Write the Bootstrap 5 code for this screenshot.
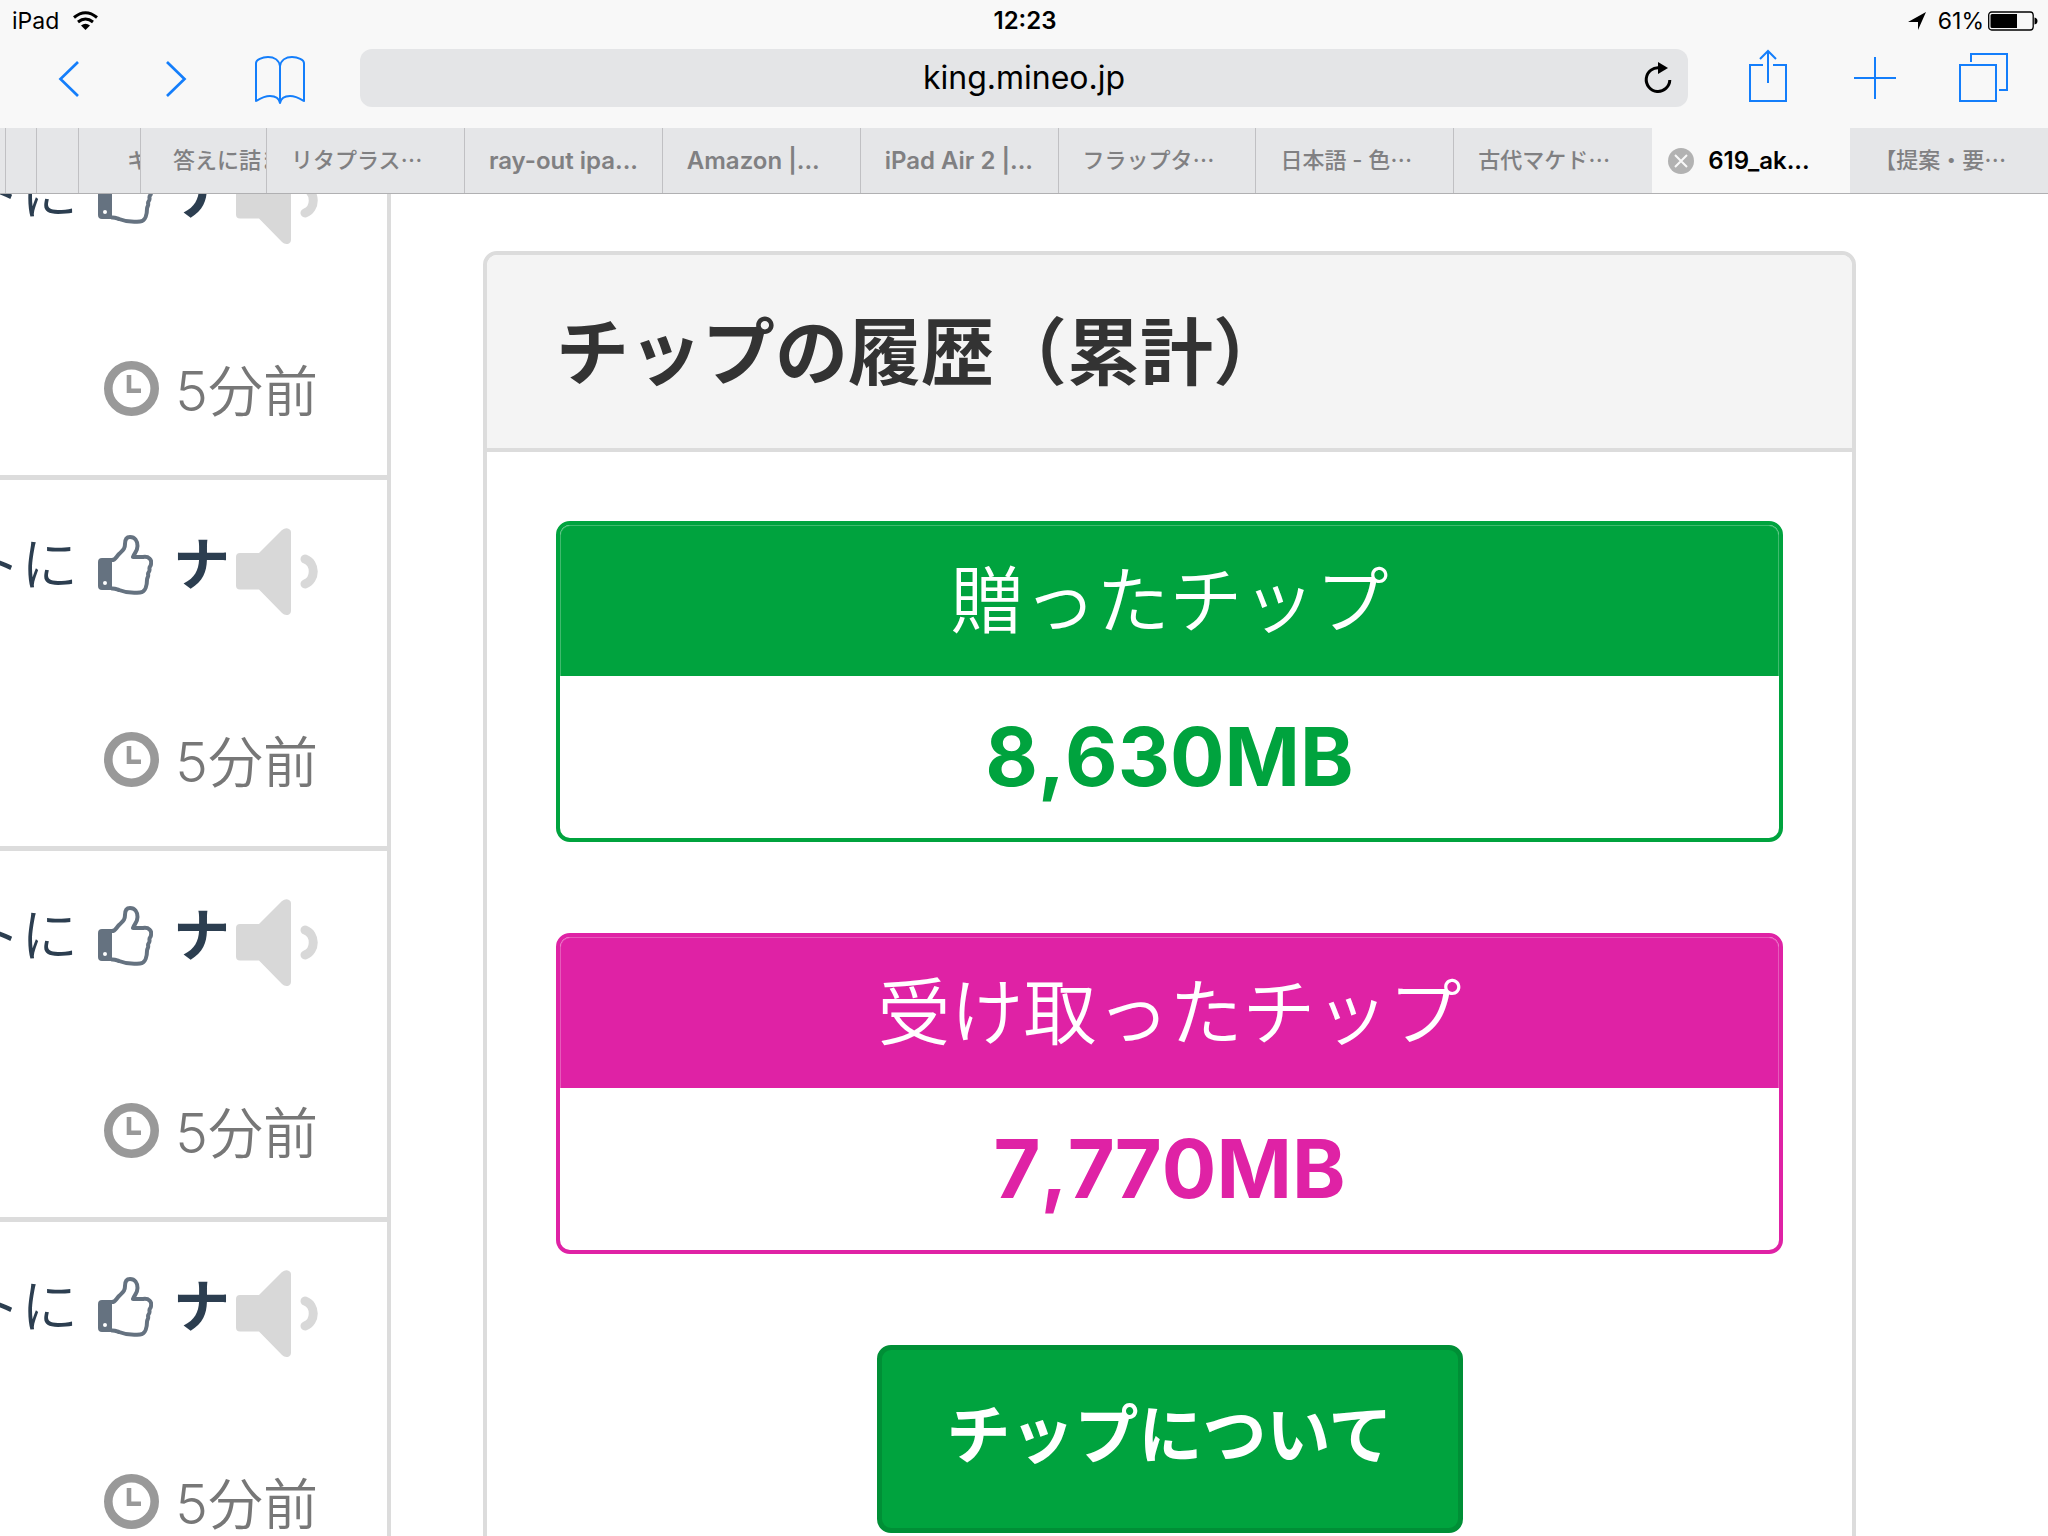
<!DOCTYPE html>
<html lang="ja">
<head>
<meta charset="utf-8">
<meta name="viewport" content="width=device-width, initial-scale=1">
<title>king.mineo.jp</title>
<link href="https://cdn.jsdelivr.net/npm/bootstrap@5.3.0/dist/css/bootstrap.min.css" rel="stylesheet">
<style>
:root { --ios-blue: #147efb; --line: #dcdcdc; --green: #00a33e; --pink: #df22a5; --ink: #2c3e50; }
body { font-family: Inter, "Noto Sans CJK JP", sans-serif; color: #333; background: #fff; }
svg { flex-shrink: 0; }
.app-shell { height: 100vh; }
.chrome { background: #f8f8f8; }
.status-bar { height: 38px; padding: 4px 10px 0 12px; font-size: 23px; line-height: 34px; color: #000; }
.status-bar > div { flex: 1 1 0; }
.clock-text { font-size: 24px; font-weight: 600; }
.toolbar { padding: 11px 15px 21px 16px; }
.tool-btn { width: 106px; height: 58px; padding: 0; border: 0; background: none; color: var(--ios-blue); }
.tool-btn svg, .reload-btn svg { display: block; }
.address { height: 58px; margin: 0 27px 0 26px; border-radius: 12px; background: #e4e5e7; padding-left: 60px; }
.address input { border: 0; background: none; text-align: center; font-size: 32px; line-height: 58px; color: #000; outline: 0; padding: 0; min-width: 0; }
.reload-btn { width: 60px; height: 58px; padding: 0; border: 0; background: none; }
.tab-strip { height: 66px; border-bottom: 1px solid #b0b0b2; }
.page-tab { flex: 1 1 198px; min-width: 0; border-right: 1px solid #c0c0c3; background: #e5e6e8; color: #808082; font-size: 22px; font-weight: 500; line-height: 65px; padding: 0 0 0 24px; overflow: hidden; white-space: nowrap; text-decoration: none; }
.page-tab.latin { font-size: 24px; font-weight: 600; }
.page-tab.current { background: #f8f8f8; color: #000; padding-left: 16px; border-right: 0; font-size: 24px; font-weight: 600; }
.page-tab.end-tab, .page-tab.before-current { border-right: 0; }
.page-tab.stacked { flex: none; }
.st-1 { width: 6px; } .st-2 { width: 31px; } .st-3 { width: 42px; } .st-4 { width: 62px; } .st-5 { width: 126px; }
.page-tab.st-1, .page-tab.st-2, .page-tab.st-3 { padding: 0; }
.page-tab.st-4 { padding-left: 48px; }
.page-tab.st-5 { padding-left: 32px; }
.close-tab { border: 0; background: none; padding: 0; width: 26px; height: 26px; margin-right: 14px; }
.close-tab svg { display: block; }
.viewport-area { min-height: 0; }
.feed { width: 391px; border-right: 4px solid var(--line); }
.feed ul { margin-top: -85px; }
.feed li { height: 371px; padding: 48px 69px 0 0; border-bottom: 5px solid var(--line); }
.feed-title { height: 87px; color: var(--ink); font-size: 57px; line-height: 74px; text-decoration: none; white-space: nowrap; font-weight: 350; }
.feed-title b { font-weight: 700; margin-right: 6px; }
.thumb-icon { margin: 7px 20px 0; color: #657280; }
.feed-time { margin-top: 115px; gap: 16px; color: #777; font-size: 55px; font-weight: 350; white-space: nowrap; }
.feed-time svg { margin: 2px 0 3px; }
.feed-time span { line-height: 56px; padding-top: 4px; }
.content-col { padding: 57px 192px 0 92px; min-width: 0; }
.history { border: 4px solid var(--line); border-radius: 14px; height: 1500px; }
.history > h1 { margin: 0; padding: 2px 69px 0; background: #f4f4f4; border-bottom: 4px solid var(--line); border-radius: 10px 10px 0 0; font-size: 73px; line-height: 191px; font-weight: 700; white-space: nowrap; }
.history-body { padding: 69px; }
.chip-box { --tone: var(--green); border: 4px solid var(--tone); border-radius: 14px; margin-bottom: 91px; text-align: center; }
.chip-box.received { --tone: var(--pink); }
.chip-box h2 { margin: 0; background: var(--tone); border: 1px solid rgba(255, 255, 255, .25); border-bottom: 0; border-radius: 10px 10px 0 0; color: #fff; font-size: 73px; line-height: 150px; font-weight: 350; }
.chip-box p { margin: 0; padding-top: 1px; color: var(--tone); font-size: 81px; line-height: 161px; font-weight: 700; font-kerning: none; }
.about-btn, .about-btn:hover { display: block; width: 586px; margin: 0 auto; padding: 0 0 8px; border: 5px solid #008f36; border-radius: 14px; background: var(--green); color: #fff; font-size: 64px; line-height: 170px; font-weight: 700; }
</style>
</head>
<body>
<svg width="0" height="0" class="d-none" aria-hidden="true">
  <symbol id="thumb" viewBox="0 0 55 60">
    <path fill="currentColor" fill-rule="evenodd" d="M4 23H14V55H4Q0 55 0 51V27Q0 23 4 23ZM7 46a2 2 0 1 0 0 4a2 2 0 1 0 0-4Z"/>
    <path fill="none" stroke="currentColor" stroke-width="4" stroke-linejoin="round" d="M13 25C17 26 18 22 21 19C25 15 27 14 27 9C27 4 29 2 32 2C37 2 39.500 6 39.500 11C39.500 16 37 17 35 22H45C51 21 54 25 53 29C53 32 51 31 51.500 34C52 37 50 37 50 39C51 42 49 42 49 45C49 49 48 57 42 57.500C34 58.500 26 57 21 55C18 54 17 53 13 53.500"/>
  </symbol>
  <symbol id="speaker" viewBox="0 0 82 87">
    <path fill="#d8d8d8" d="M4 25H23L46 2Q50-1 53 1Q55 2 55 4V83Q55 85 53 86.500Q49 88 46 85L23 61.500H4Q0 61.500 0 57.500V29Q0 25 4 25Z"/>
    <path fill="none" stroke="#d8d8d8" stroke-width="9" stroke-linecap="round" d="M69 31C80 35 80 52 69 56"/>
  </symbol>
  <symbol id="clock" viewBox="0 0 55 55">
    <circle cx="27.500" cy="27.500" r="23.200" fill="none" stroke="#999" stroke-width="8.600"/>
    <path fill="none" stroke="#999" stroke-width="4.600" d="M25 14V29.700H37"/>
  </symbol>
</svg>
<div class="app-shell d-flex flex-column overflow-hidden">
  <header class="chrome flex-shrink-0">
    <div class="status-bar d-flex align-items-center">
      <div class="d-flex align-items-center">iPad
        <svg class="ms-2" width="36" height="20" viewBox="0 0 36 20" aria-label="Wi-Fi"><g fill="none" stroke="#000" stroke-width="3"><path d="M7 6.500Q18.500-3 30 6.500"/><path d="M11 11Q18.500 5 26 11"/></g><path d="M14 14.500Q18.500 11 23 14.500L18.500 19Z"/></svg>
      </div>
      <span class="clock-text">12:23</span>
      <div class="d-flex align-items-center justify-content-end">
        <svg class="me-2" width="24" height="20" viewBox="0 0 24 20" aria-label="位置情報"><path d="M20 1L12 19V11H2Z"/></svg>
        <span class="me-1">61%</span>
        <svg width="50" height="20" viewBox="0 0 50 20" aria-label="バッテリー"><rect x=".7" y="1" width="44.500" height="18" rx="3" fill="none" stroke="#000" stroke-width="1.300"/><path d="M4 3H29V17H4Q2.500 17 2.500 15.500V4.500Q2.500 3 4 3ZM46.500 6.500Q49.500 7 49.500 10Q49.500 13 46.500 13.500Z"/></svg>
      </div>
    </div>
    <nav class="toolbar d-flex align-items-center">
      <button class="tool-btn" type="button" aria-label="戻る"><svg width="106" height="58" fill="none" stroke="currentColor" stroke-width="2.700"><path d="M62 13L44.500 30L62 47"/></svg></button>
      <button class="tool-btn" type="button" aria-label="進む"><svg width="106" height="58" fill="none" stroke="currentColor" stroke-width="2.700"><path d="M45 13L62.500 30L45 47"/></svg></button>
      <button class="tool-btn" type="button" aria-label="ブックマーク"><svg width="106" height="58" fill="none" stroke="currentColor" stroke-width="2"><path stroke-linejoin="round" d="M52 53V17C51 11 46 8 40 8C34 8 28 11 28 14V52C33 49 36 47 42 47C48 47 51 49 52 54C53 49 56 47 62 47C68 47 71 49 76 52V14C76 11 70 8 64 8C58 8 53 11 52 17"/></svg></button>
      <form class="address d-flex flex-grow-1" onsubmit="return false">
        <input class="flex-grow-1" type="text" aria-label="アドレス" value="king.mineo.jp">
        <button class="reload-btn" type="button" aria-label="再読み込み"><svg width="60" height="58"><path fill="none" stroke="#000" stroke-width="3" d="M32 19A11.800 11.800 0 1 0 41.800 31"/><path d="M30 13L40 19L30 25Z"/></svg></button>
      </form>
      <button class="tool-btn" type="button" aria-label="共有"><svg width="106" height="58" fill="none" stroke="currentColor" stroke-width="2"><path d="M48 16H35V52H71V16H58M53 34V2M45 10L53 2L61 10"/></svg></button>
      <button class="tool-btn" type="button" aria-label="新規タブ"><svg width="106" height="58" fill="none" stroke="currentColor" stroke-width="2"><path d="M54 8V50M33 29H75"/></svg></button>
      <button class="tool-btn" type="button" aria-label="タブ一覧"><svg width="106" height="58" fill="none" stroke="currentColor" stroke-width="2"><path d="M33 16H69V52H33ZM44 13V5H80V41H72"/></svg></button>
    </nav>
    <nav class="tab-strip d-flex" aria-label="タブ">
      <a href="#" class="page-tab stacked st-1" aria-label="タブ1"></a>
      <a href="#" class="page-tab stacked st-2" aria-label="タブ2"></a>
      <a href="#" class="page-tab stacked st-3" aria-label="タブ3"></a>
      <a href="#" class="page-tab stacked st-4">キ</a>
      <a href="#" class="page-tab stacked st-5">答えに詰ま</a>
      <a href="#" class="page-tab">リタプラス⋯</a>
      <a href="#" class="page-tab latin">ray-out ipa...</a>
      <a href="#" class="page-tab latin">Amazon |...</a>
      <a href="#" class="page-tab latin">iPad Air 2 |...</a>
      <a href="#" class="page-tab">フラップタ⋯</a>
      <a href="#" class="page-tab">日本語 - 色⋯</a>
      <a href="#" class="page-tab before-current">古代マケド⋯</a>
      <div class="page-tab current d-flex align-items-center">
        <button class="close-tab" type="button" aria-label="タブを閉じる"><svg width="26" height="26"><circle cx="13" cy="13" r="13" fill="#b2b2b2"/><path stroke="#f8f8f8" stroke-width="2" d="M7 7L19 19M19 7L7 19"/></svg></button>
        <span>619_ak...</span>
      </div>
      <a href="#" class="page-tab end-tab">【提案・要⋯</a>
    </nav>
  </header>
  <div class="viewport-area d-flex flex-grow-1 overflow-hidden">
    <aside class="feed flex-shrink-0 overflow-hidden">
      <ul class="list-unstyled mb-0">
        <li>
          <a href="#" class="feed-title d-flex justify-content-end"><span>トに</span><svg class="thumb-icon" width="55" height="60"><use href="#thumb"/></svg><b>ナ</b><svg width="82" height="87"><use href="#speaker"/></svg></a>
          <div class="feed-time d-flex align-items-center justify-content-end"><svg width="55" height="55"><use href="#clock"/></svg><span>5分前</span></div>
        </li>
        <li>
          <a href="#" class="feed-title d-flex justify-content-end"><span>トに</span><svg class="thumb-icon" width="55" height="60"><use href="#thumb"/></svg><b>ナ</b><svg width="82" height="87"><use href="#speaker"/></svg></a>
          <div class="feed-time d-flex align-items-center justify-content-end"><svg width="55" height="55"><use href="#clock"/></svg><span>5分前</span></div>
        </li>
        <li>
          <a href="#" class="feed-title d-flex justify-content-end"><span>トに</span><svg class="thumb-icon" width="55" height="60"><use href="#thumb"/></svg><b>ナ</b><svg width="82" height="87"><use href="#speaker"/></svg></a>
          <div class="feed-time d-flex align-items-center justify-content-end"><svg width="55" height="55"><use href="#clock"/></svg><span>5分前</span></div>
        </li>
        <li>
          <a href="#" class="feed-title d-flex justify-content-end"><span>トに</span><svg class="thumb-icon" width="55" height="60"><use href="#thumb"/></svg><b>ナ</b><svg width="82" height="87"><use href="#speaker"/></svg></a>
          <div class="feed-time d-flex align-items-center justify-content-end"><svg width="55" height="55"><use href="#clock"/></svg><span>5分前</span></div>
        </li>
      </ul>
    </aside>
    <main class="content-col flex-grow-1">
      <section class="history">
        <h1>チップの履歴（累計）</h1>
        <div class="history-body">
          <div class="chip-box"><h2>贈ったチップ</h2><p>8,630MB</p></div>
          <div class="chip-box received"><h2>受け取ったチップ</h2><p>7,770MB</p></div>
          <button type="button" class="btn about-btn">チップについて</button>
        </div>
      </section>
    </main>
  </div>
</div>
<script src="https://cdn.jsdelivr.net/npm/bootstrap@5.3.0/dist/js/bootstrap.bundle.min.js"></script>
</body>
</html>
